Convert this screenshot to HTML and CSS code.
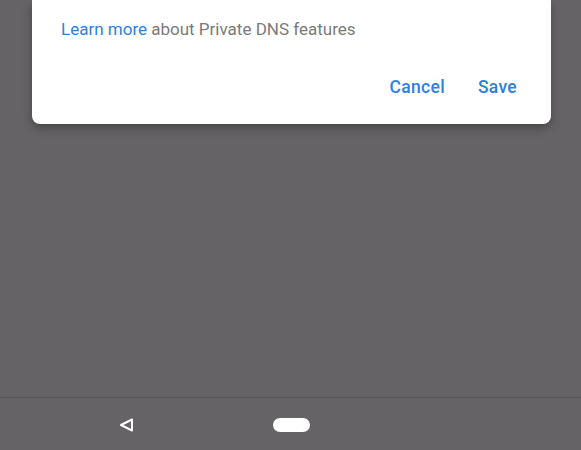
FILE: index.html
```html
<!DOCTYPE html>
<html>
<head>
    <meta charset="utf-8">
    <title>Private DNS</title>
    <link rel="stylesheet" href="styles.css">
</head>
<body>
    <div class="screen">
        <div class="dialog">
            <p class="note"><a class="link" href="#">Learn more</a> about Private DNS features</p>
            <div class="actions">
                <span class="btn">Cancel</span>
                <span class="btn">Save</span>
            </div>
        </div>
    </div>
    <div class="navbar">
        <span class="back">
            <svg width="15" height="14" viewBox="0 0 15 14">
                <path d="M2 7 L13 1.5 L13 12.5 Z" fill="none" stroke="#fff" stroke-width="2" stroke-linejoin="round"/>
            </svg>
        </span>
        <span class="home"></span>
    </div>
</body>
</html>
```

FILE: styles.css
```css
* {
    box-sizing: border-box;
    margin: 0;
    padding: 0;
}

body {
    background-color: #656366;
    font-family: Roboto, "Noto Sans", sans-serif;
    width: 581px;
    height: 450px;
    overflow: hidden;
}

.screen {
    height: 397px;
    padding: 0 30px 0 32px;
}

.dialog {
    background-color: #fff;
    height: 124px;
    border-radius: 0 0 8px 8px;
    box-shadow: 0 4px 10px rgba(0, 0, 0, 0.3);
    padding: 19px 34px 0 29px;
}

.note {
    font-size: 17px;
    line-height: 21px;
    color: #7a7a7a;
}

.link {
    color: #2f7fe0;
    text-decoration: none;
}

.actions {
    display: flex;
    justify-content: flex-end;
    gap: 33px;
    margin-top: 37px;
}

.btn {
    font-size: 17.5px;
    font-weight: 500;
    color: #2f7fe0;
    line-height: 21px;
    letter-spacing: 0.3px;
}

.navbar {
    height: 53px;
    border-top: 1px solid #5a585b;
    display: flex;
    align-items: center;
    padding-left: 119px;
}

.back {
    display: flex;
    width: 15px;
    height: 14px;
    margin-top: 2px;
}

.home {
    width: 37px;
    height: 14px;
    border-radius: 7px;
    background-color: #fff;
    margin-left: 139px;
    margin-top: 2px;
}
```
